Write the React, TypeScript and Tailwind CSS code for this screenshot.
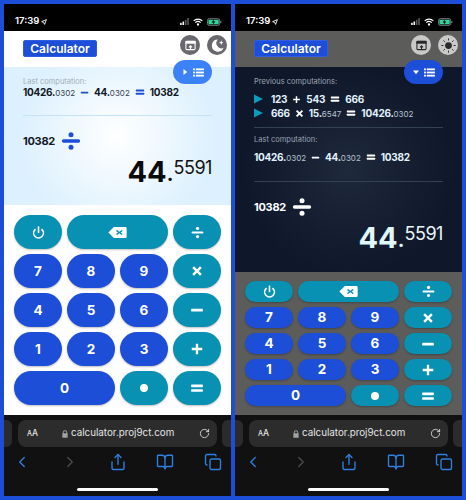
import React from 'react';
import { ChevronLeft, ChevronRight, Share, BookOpen, Copy, RotateCw, Power } from 'lucide-react';

type OpKind = 'plus' | 'minus' | 'times' | 'divide' | 'equals';

// operator glyphs are drawn so that the thick bars match the calculator font
const Op = ({ kind, className }: { kind: OpKind; className?: string }) => (
  <svg viewBox="0 0 24 24" className={className} fill="currentColor">
    {kind === 'plus' && <path d="M10 3h4v7h7v4h-7v7h-4v-7H3v-4h7z" />}
    {kind === 'minus' && <rect x="2" y="10" width="20" height="4.5" rx="1" />}
    {kind === 'times' && <path d="M6 2.500 12 8.500l6-6 3.500 3.500-6 6 6 6-3.500 3.500-6-6-6 6L2.500 18l6-6-6-6z" />}
    {kind === 'equals' && (
      <>
        <rect x="2" y="6" width="20" height="4.500" rx="1" />
        <rect x="2" y="14" width="20" height="4.500" rx="1" />
      </>
    )}
    {kind === 'divide' && (
      <>
        <circle cx="12" cy="4.500" r="3" />
        <rect x="1" y="10" width="22" height="4" rx="2" />
        <circle cx="12" cy="19.500" r="3" />
      </>
    )}
  </svg>
);

const Num = ({ whole, frac, dark }: { whole: string; frac?: string; dark: boolean }) => (
  <span className={`font-bold text-[10px] tracking-tight ${dark ? 'text-[#e0f2fe]' : 'text-[#111827]'}`}>
    {whole}
    {frac && <span className={`font-normal text-[8px] tracking-normal ${dark ? 'text-[#b6c2cf]' : 'text-[#374151]'}`}>{frac}</span>}
  </span>
);

const Computation = ({ a, op, b, result, dark }: {
  a: [string, string?];
  op: OpKind;
  b: [string, string?];
  result: [string, string?];
  dark: boolean;
}) => {
  const opColor = dark ? 'text-white' : 'text-[#1d4ed8]';
  return (
    <div className="flex items-center gap-[5px] h-[12px]">
      <Num whole={a[0]} frac={a[1]} dark={dark} />
      <Op kind={op} className={`w-[9px] h-[9px] ${opColor}`} />
      <Num whole={b[0]} frac={b[1]} dark={dark} />
      <Op kind="equals" className={`w-[10px] h-[10px] ${opColor}`} />
      <Num whole={result[0]} frac={result[1]} dark={dark} />
    </div>
  );
};

const StatusBar = () => (
  <div className="h-[27px] bg-black flex items-center justify-between pl-[11px] pr-[9px] pt-[8px] text-white shrink-0">
    <div className="flex items-center gap-[2px]">
      <span className="text-[9.500px] font-semibold">17:39</span>
      <svg viewBox="0 0 10 10" className="w-[6px] h-[6px]" fill="none" stroke="currentColor" strokeWidth="1.500">
        <path d="M9 1 1 4.500l3.500 1L6 9z" />
      </svg>
    </div>
    <div className="flex items-center gap-[4px]">
      <svg viewBox="0 0 10 8" className="w-[9px] h-[7px]" fill="currentColor">
        <rect x="0" y="5.500" width="1.800" height="2.500" />
        <rect x="2.700" y="4" width="1.800" height="4" />
        <rect x="5.400" y="2" width="1.800" height="6" opacity="0.35" />
        <rect x="8.100" y="0" width="1.800" height="8" opacity="0.35" />
      </svg>
      <svg viewBox="0 0 12 9" className="w-[10px] h-[8px]" fill="none" stroke="currentColor" strokeWidth="1.400">
        <path d="M.8 3.200a7.500 7.500 0 0 1 10.400 0M2.800 5.200a4.600 4.600 0 0 1 6.400 0" />
        <circle cx="6" cy="7.500" r="0.700" fill="currentColor" />
      </svg>
      <svg viewBox="0 0 16 8" className="w-[15px] h-[8px]">
        <rect x="0.500" y="0.500" width="13" height="7" rx="1.800" fill="none" stroke="#9ca3af" strokeWidth="0.800" />
        <rect x="1.500" y="1.500" width="11" height="5" rx="1" fill="#34d399" />
        <path d="M7.500 1 4.800 4.500h2L6 7l3-3.600H7z" fill="#0a0a0a" />
        <rect x="14.300" y="2.800" width="1" height="2.400" rx="0.500" fill="#9ca3af" />
      </svg>
    </div>
  </div>
);

const Header = ({ dark }: { dark: boolean }) => {
  const circle = dark ? 'bg-[#c9c9c9] text-[#2a2a2a]' : 'bg-[#68686e] text-white';
  return (
    <div className={`h-[36px] shrink-0 flex items-start justify-between pl-[19px] pr-[4px] pt-[4px] ${dark ? 'bg-[#5c5c5a]' : 'bg-white'}`}>
      <div className="mt-[5px] w-[74px] h-[17px] rounded-[2px] bg-[#1d4ed8] border border-[#2f5fe0] flex items-center justify-center text-white text-[12px] font-semibold">
        Calculator
      </div>
      <div className="flex gap-[7px]">
        <div className={`w-[20px] h-[20px] rounded-full flex items-center justify-center ${circle}`}>
          <svg viewBox="0 0 12 12" className="w-[11px] h-[11px]" fill="none" stroke="currentColor">
            <rect x="1" y="1.500" width="10" height="9" rx="1" strokeWidth="1.200" />
            <rect x="1" y="1.500" width="10" height="2" fill="currentColor" />
            <path d="M6 10.500V6.500M4.300 8 6 6.300 7.700 8" strokeWidth="1.200" />
          </svg>
        </div>
        <div className={`w-[20px] h-[20px] rounded-full flex items-center justify-center ${circle}`}>
          {dark ? (
            <svg viewBox="0 0 16 16" className="w-[15px] h-[15px]" fill="currentColor" stroke="currentColor" strokeWidth="1" strokeLinecap="round">
              <circle cx="8" cy="8" r="3.600" stroke="none" />
              <path d="M8 .8v1.400M8 13.800v1.400M.8 8h1.400M13.800 8h1.400M2.900 2.900l1 1M12.100 12.100l1 1M2.900 13.100l1-1M12.100 3.900l1-1" />
            </svg>
          ) : (
            <svg viewBox="0 0 16 16" className="w-[15px] h-[15px]" fill="currentColor">
              <path d="M8.500 1.500a6.500 6.500 0 1 0 6 9 5.500 5.500 0 0 1-6-9z" />
              <path d="M12 2.500l.7 1.800 1.800.7-1.800.7-.7 1.800-.7-1.800-1.800-.7 1.800-.7z" />
            </svg>
          )}
        </div>
      </div>
    </div>
  );
};

const HistoryPill = ({ dark }: { dark: boolean }) => (
  <div className={`absolute left-[169px] top-[56px] w-[39px] h-[24px] rounded-full flex items-center justify-center gap-[5px] text-white ${dark ? 'bg-[#1d4ed8]' : 'bg-[#3b82f6] shadow-[0_0_2px_rgba(255,255,255,0.9)]'}`}>
    <svg viewBox="0 0 8 8" className="w-[6px] h-[6px]" fill="currentColor">
      {dark ? <path d="M0 2h8L4 7z" /> : <path d="M2 0l5 4-5 4z" />}
    </svg>
    <svg viewBox="0 0 12 10" className="w-[11px] h-[9px]" fill="currentColor">
      <rect x="0" y="0.500" width="2" height="2" />
      <rect x="3" y="0.500" width="9" height="2" />
      <rect x="0" y="4" width="2" height="2" />
      <rect x="3" y="4" width="9" height="2" />
      <rect x="0" y="7.500" width="2" height="2" />
      <rect x="3" y="7.500" width="9" height="2" />
    </svg>
  </div>
);

const Label = ({ children, dark }: { children: React.ReactNode; dark: boolean }) => (
  <div className={`text-[7.500px] h-[10px] leading-[10px] ${dark ? 'text-[#9aa4b2]' : 'text-[#a3adb8]'}`}>{children}</div>
);

const Result = ({ dark }: { dark: boolean }) => (
  <div className={`flex justify-end items-start ${dark ? 'text-[#e0f7fa]' : 'text-[#0a0a0a]'}`}>
    <span className="text-[29px] leading-[29px] font-bold">44</span>
    <span className="text-[20px] leading-[29px] font-bold mt-[3px]">.</span>
    <span className={`text-[18px] leading-[19px] mt-[1px] tracking-tight ${dark ? 'text-[#e8f4f8]' : 'text-[#111]'}`}>5591</span>
  </div>
);

const Operand = ({ dark }: { dark: boolean }) => (
  <div className={`flex items-center gap-[6px] h-[20px] ${dark ? 'text-white' : 'text-[#1d4ed8]'}`}>
    <span className={`font-bold text-[11px] tracking-tight ${dark ? 'text-white' : 'text-[#111827]'}`}>10382</span>
    <Op kind="divide" className="w-[20px] h-[20px]" />
  </div>
);

const LightDisplay = () => (
  <div className="h-[138px] shrink-0 px-[19px] pt-[10px] bg-[radial-gradient(circle_at_50%_50%,#ffffff_0%,#dcf0fd_75%)]">
    <Label dark={false}>Last computation:</Label>
    <div className="-mt-[1px]">
      <Computation a={['10426.', '0302']} op="minus" b={['44.', '0302']} result={['10382']} dark={false} />
    </div>
    <div className="h-px bg-[#c5e3f6] mt-[17px] mb-[15px]" />
    <Operand dark={false} />
    <div className="mt-[6px]"><Result dark={false} /></div>
  </div>
);

const Previous = ({ children }: { children: React.ReactNode }) => (
  <div className="flex items-center gap-[8px] h-[14px]">
    <svg viewBox="0 0 10 10" className="w-[9px] h-[10px] text-[#0e9ab8]" fill="currentColor"><path d="M0 0l10 5-10 5z" /></svg>
    {children}
  </div>
);

const DarkDisplay = () => (
  <div className="h-[205px] shrink-0 px-[19px] pt-[10px] bg-[radial-gradient(circle_at_50%_50%,#1e293b_0%,#0f172a_70%)]">
    <Label dark>Previous computations:</Label>
    <div className="mt-[5px]">
      <Previous><Computation a={['123']} op="plus" b={['543']} result={['666']} dark /></Previous>
      <Previous><Computation a={['666']} op="times" b={['15.', '6547']} result={['10426.', '0302']} dark /></Previous>
    </div>
    <div className="h-px bg-[#334155] mt-[7px] mb-[7px]" />
    <Label dark>Last computation:</Label>
    <div className="mt-[6px]">
      <Computation a={['10426.', '0302']} op="minus" b={['44.', '0302']} result={['10382']} dark />
    </div>
    <div className="h-px bg-[#334155] mt-[18px] mb-[15px]" />
    <Operand dark />
    <div className="mt-[6px]"><Result dark /></div>
  </div>
);

const Key = ({ children, teal, wide }: { children: React.ReactNode; teal?: boolean; wide?: boolean }) => (
  <div className={`rounded-full flex items-center justify-center text-white text-[13.500px] font-bold shadow-[0_1px_2px_rgba(0,0,0,0.25)] ${teal ? 'bg-[#0891b2]' : 'bg-[#1d4ed8]'} ${wide ? 'col-span-2' : ''}`}>
    {children}
  </div>
);

const Keypad = ({ dark }: { dark: boolean }) => (
  <div className={`flex-1 px-[10px] ${dark ? 'bg-[#5c5c5a] pt-[9px]' : 'bg-white pt-[10px]'}`}>
    <div className={`grid grid-cols-4 gap-x-[5px] gap-y-[5px] ${dark ? 'auto-rows-[21px]' : 'auto-rows-[34px]'}`}>
      <Key teal><Power size={13} strokeWidth={3} /></Key>
      <Key teal wide>
        <svg viewBox="0 0 20 12" className="w-[19px] h-[11px]" fill="currentColor">
          <path fillRule="evenodd" d="M6 0h12.500A1.500 1.500 0 0 1 20 1.500v9a1.500 1.500 0 0 1-1.500 1.500H6L0 6zm3.500 3.200L12 5.200l2.500-2 1.200 1.200L13.400 6l2.300 1.600-1.200 1.200-2.500-2-2.500 2-1.200-1.200L10.600 6 8.300 4.400z" />
        </svg>
      </Key>
      <Key teal><Op kind="divide" className="w-[13px] h-[13px]" /></Key>
      <Key>7</Key><Key>8</Key><Key>9</Key>
      <Key teal><Op kind="times" className="w-[12px] h-[12px]" /></Key>
      <Key>4</Key><Key>5</Key><Key>6</Key>
      <Key teal><Op kind="minus" className="w-[14px] h-[14px]" /></Key>
      <Key>1</Key><Key>2</Key><Key>3</Key>
      <Key teal><Op kind="plus" className="w-[14px] h-[14px]" /></Key>
      <Key wide>0</Key>
      <Key teal><div className="w-[8px] h-[8px] rounded-full bg-white" /></Key>
      <Key teal><Op kind="equals" className="w-[14px] h-[14px]" /></Key>
    </div>
  </div>
);

const SafariBar = () => (
  <div className="h-[81px] shrink-0 bg-[#111111] pt-[5px] flex flex-col">
    <div className="flex h-[27px] gap-[6px]">
      <div className="w-[8px] rounded-r-[6px] bg-[#2b2b2b]" />
      <div className="w-[199px] rounded-[8px] bg-[#2c2c2c] flex items-center pl-[9px] pr-[7px] text-[#e5e5e5]">
        <span className="text-[8.500px] font-medium w-[35px]">
          <span className="text-[7px]">A</span>A
        </span>
        <svg viewBox="0 0 8 10" className="w-[6px] h-[8px] text-[#a3a3a3]" fill="currentColor">
          <path d="M1 4V3a3 3 0 0 1 6 0v1h.500v6H.500V4zm1.200 0h3.600V3a1.800 1.800 0 0 0-3.600 0z" />
        </svg>
        <span className="ml-[3px] text-[9.800px] flex-1 whitespace-nowrap">calculator.proj9ct.com</span>
        <RotateCw size={11} strokeWidth={1.800} />
      </div>
      <div className="w-[9px] ml-[-1px] rounded-l-[6px] bg-[#2b2b2b]" />
    </div>
    <div className="flex items-center justify-between px-[9px] mt-[4px] h-[22px] text-[#2f80e0]">
      <ChevronLeft size={18} strokeWidth={1.800} />
      <ChevronRight size={18} strokeWidth={1.800} className="text-[#4b4b4b]" />
      <Share size={18} strokeWidth={1.800} />
      <BookOpen size={18} strokeWidth={1.800} />
      <Copy size={18} strokeWidth={1.800} />
    </div>
    <div className="w-[81px] h-[3px] rounded-full bg-white mt-[15px] ml-[73px]" />
  </div>
);

const Phone = ({ dark }: { dark: boolean }) => (
  <div className="relative w-[227px] h-[492px] flex flex-col overflow-hidden">
    <StatusBar />
    <Header dark={dark} />
    {dark ? <DarkDisplay /> : <LightDisplay />}
    <Keypad dark={dark} />
    <SafariBar />
    <HistoryPill dark={dark} />
  </div>
);

export default function App() {
  return (
    <div className="w-[466px] h-[500px] bg-[#1d4ed8] p-[4px] flex gap-[4px] font-['Inter',sans-serif]">
      <Phone dark={false} />
      <Phone dark />
    </div>
  );
}
